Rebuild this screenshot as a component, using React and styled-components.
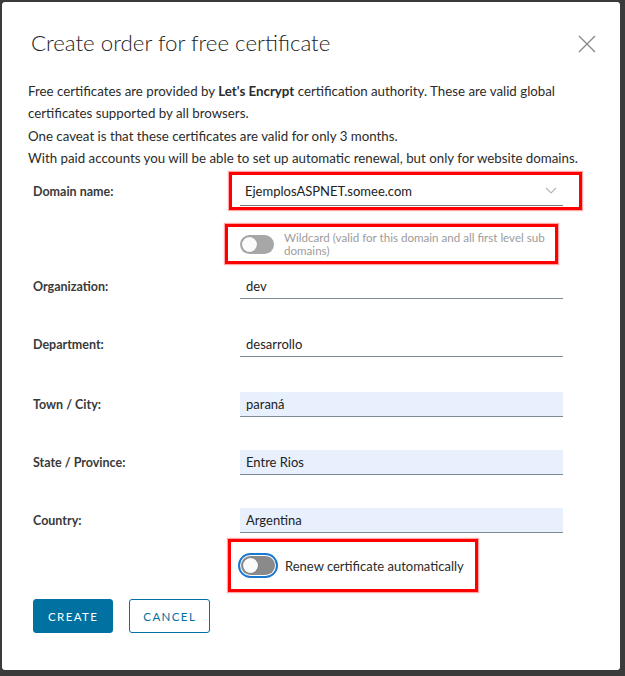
import styled, { createGlobalStyle } from 'styled-components';

const GlobalStyle = createGlobalStyle`
  html, body {
    margin: 0;
    padding: 0;
    background: #3b3b3b;
  }
  * {
    box-sizing: border-box;
  }
`;

const fields = [
  { label: 'Organization:', value: 'dev', filled: false, top: 10 },
  { label: 'Department:', value: 'desarrollo', filled: false, top: 33 },
  { label: 'Town / City:', value: 'paraná', filled: true, top: 35 },
  { label: 'State / Province:', value: 'Entre Rios', filled: true, top: 33 },
  { label: 'Country:', value: 'Argentina', filled: true, top: 33 },
];

function App() {
  return (
    <>
      <GlobalStyle />
      <Frame>
        <Dialog>
          <Header>
            <Title>Create order for free certificate</Title>
            <CloseButton aria-label="Close">
              <svg width="18" height="18" viewBox="0 0 18 18">
                <path d="M1 1 L17 17 M17 1 L1 17" stroke="#8a8a8a" strokeWidth="1.4" />
              </svg>
            </CloseButton>
          </Header>

          <Intro>
            Free certificates are provided by <b>Let's Encrypt</b> certification authority. These are valid global
            certificates supported by all browsers.
            <br />
            One caveat is that these certificates are valid for only 3 months.
            <br />
            With paid accounts you will be able to set up automatic renewal, but only for website domains.
          </Intro>

          <Form>
            <Row $top={3}>
              <Label>Domain name:</Label>
              <Highlight $left={-11} $right={-19} $pad="4px 16px 1px 8px">
                <Select>
                  <span>EjemplosASPNET.somee.com</span>
                  <svg width="12" height="8" viewBox="0 0 12 8">
                    <path d="M1 1 L6 6 L11 1" fill="none" stroke="#b5b5b5" strokeWidth="1.2" />
                  </svg>
                </Select>
              </Highlight>
            </Row>

            <Row $top={14}>
              <span />
              <Highlight $left={-15} $right={5} $pad="4px 8px 4px 12px">
                <ToggleLine>
                  <Toggle $disabled />
                  <WildcardText>
                    <span>Wildcard (valid for this domain and all first level sub</span>
                    <span>domains)</span>
                  </WildcardText>
                </ToggleLine>
              </Highlight>
            </Row>

            {fields.map((f) => (
              <Row key={f.label} $top={f.top}>
                <Label>{f.label}</Label>
                <Input $filled={f.filled}>{f.value}</Input>
              </Row>
            ))}

            <Row $top={6}>
              <span />
              <Highlight $left={-12} $right={85} $pad="11px 8px 11px 7px">
                <ToggleLine>
                  <Toggle $focused />
                  <RenewText>Renew certificate automatically</RenewText>
                </ToggleLine>
              </Highlight>
            </Row>
          </Form>

          <Actions>
            <Button $primary>Create</Button>
            <Button>Cancel</Button>
          </Actions>
        </Dialog>
      </Frame>
    </>
  );
}

export default App;

const Frame = styled.div`
  width: 625px;
  height: 676px;
  padding: 2px 5px 6px 2px;
`;

const Dialog = styled.div`
  height: 100%;
  background: #fff;
  border-radius: 3px;
  padding: 27px 24px 0 26px;
  font-family: Lato, 'Open Sans', sans-serif;
  color: #2b2b2b;
`;

const Header = styled.div`
  display: flex;
  align-items: center;
  justify-content: space-between;
  height: 28px;
`;

const Title = styled.h1`
  margin: 0 0 0 3px;
  font-size: 22.3px;
  line-height: 28px;
  font-weight: 300;
  color: #222;
`;

const CloseButton = styled.button`
  display: flex;
  border: none;
  background: none;
  padding: 0;
  margin-top: 2px;
  cursor: pointer;
`;

const Intro = styled.p`
  margin: 23px 0 0;
  font-size: 13.3px;
  line-height: 22.3px;
  color: #2b2b2b;

  b {
    font-weight: 700;
  }
`;

const Form = styled.div`
  display: flex;
  flex-direction: column;
  padding-left: 5px;
`;

const Row = styled.div`
  display: grid;
  grid-template-columns: 207px 323px;
  align-items: center;
  margin-top: ${(p) => p.$top}px;
`;

const Label = styled.div`
  font-size: 12.5px;
  font-weight: 700;
  color: #3a3a3a;
`;

const Highlight = styled.div`
  margin-left: ${(p) => p.$left}px;
  margin-right: ${(p) => p.$right}px;
  padding: ${(p) => p.$pad};
  border: 3px solid #f00;
  box-shadow: 0 0 1px 1px rgba(255, 80, 80, 0.5);
`;

const Select = styled.div`
  display: flex;
  align-items: center;
  justify-content: space-between;
  height: 27px;
  padding: 0 6px 2px 5px;
  border-bottom: 1px solid #7a7a7a;
  font-size: 13px;
  color: #222;
`;

const Input = styled.div`
  height: 25px;
  display: flex;
  align-items: center;
  padding: 0 6px;
  background: ${(p) => (p.$filled ? '#e8f0fe' : '#fff')};
  border-bottom: 1px solid #7d8a96;
  font-size: 13px;
  color: #222;
`;

const ToggleLine = styled.div`
  display: flex;
  align-items: center;
  gap: 10px;
`;

const Toggle = styled.span`
  position: relative;
  flex: none;
  width: 34px;
  height: 19px;
  border-radius: 10px;
  background: #8a8a8a;
  opacity: ${(p) => (p.$disabled ? 0.75 : 1)};
  box-shadow: ${(p) => (p.$focused ? '0 0 0 1px #fff, 0 0 0 3px #1a78d0' : 'none')};
  margin: ${(p) => (p.$focused ? '3px 0 3px 3px' : '0')};

  &::after {
    content: '';
    position: absolute;
    top: 2px;
    left: 2px;
    width: 15px;
    height: 15px;
    border-radius: 50%;
    background: #fafafa;
    box-shadow: 0 0 1px rgba(0, 0, 0, 0.4);
  }
`;

const WildcardText = styled.span`
  display: flex;
  flex-direction: column;
  font-size: 11.6px;
  line-height: 13px;
  color: #9c9c9c;
  white-space: nowrap;
`;

const RenewText = styled.span`
  font-size: 13px;
  color: #2b2b2b;
`;

const Actions = styled.div`
  display: flex;
  gap: 16px;
  margin-top: 7px;
  padding-left: 5px;
`;

const Button = styled.button`
  height: 34px;
  padding: 0 ${(p) => (p.$primary ? 14 : 13)}px;
  border-radius: 3px;
  border: 1px solid #0071a1;
  background: ${(p) => (p.$primary ? '#0071a1' : '#fff')};
  color: ${(p) => (p.$primary ? '#fff' : '#0071a1')};
  font-family: Lato, sans-serif;
  font-size: 11.5px;
  letter-spacing: 1.4px;
  text-transform: uppercase;
  cursor: pointer;
`;
